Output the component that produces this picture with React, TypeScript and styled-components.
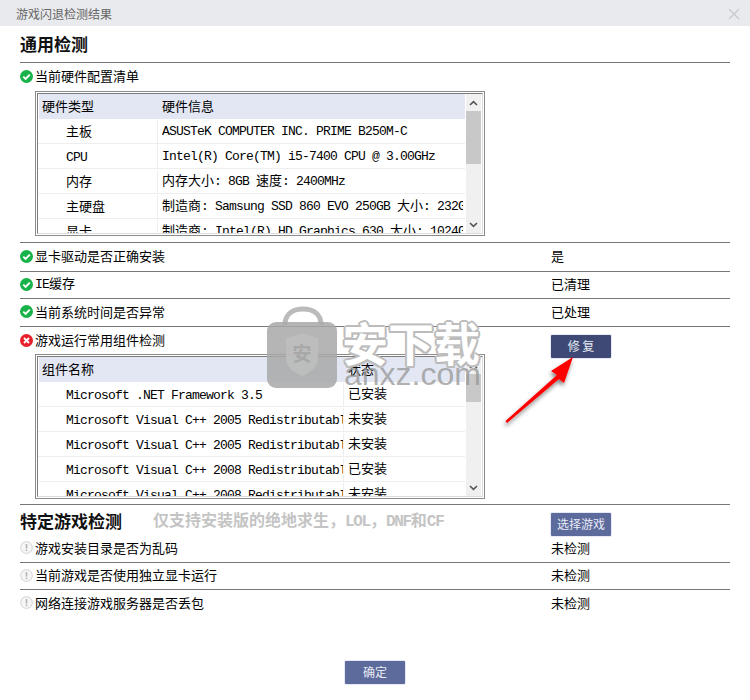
import React from "react";
import styled, { createGlobalStyle } from "styled-components";

const Global = createGlobalStyle`
  html, body { margin: 0; padding: 0; background: #fff; }
  body { font-family: "Noto Sans CJK SC", "Liberation Sans", sans-serif; font-size: 13px; color: #000; }
`;

const Window = styled.div`
  position: relative;
  width: 750px;
  height: 700px;
  display: flex;
  flex-direction: column;
  overflow: hidden;
  background: #fff;
`;
const TitleBar = styled.div`
  height: 26px;
  flex: none;
  background: #e9eaee;
  display: flex;
  align-items: center;
  justify-content: space-between;
  padding: 1px 10px 0 16px;
  box-sizing: border-box;
  font-size: 12px;
  line-height: 24px;
  color: #666;
`;
const Main = styled.main`
  flex: 1;
  padding: 0 20px;
`;
const Heading = styled.h2`
  margin: 0;
  font-size: 17px;
  font-weight: 700;
  line-height: 20px;
  color: #111;
`;
const HeadingBar = styled.div`
  height: 36px;
  display: flex;
  align-items: center;
  padding-bottom: 1px;
  box-sizing: border-box;
`;
const Row = styled.section<{ $h: number; $rule?: boolean; $top?: boolean; $pb?: number }>`
  box-sizing: border-box;
  height: ${(p) => p.$h}px;
  padding-bottom: ${(p) => p.$pb ?? 2}px;
  border-top: ${(p) => (p.$rule === false ? "none" : "1px solid #777")};
  display: grid;
  grid-template-columns: 531px 1fr;
  align-items: ${(p) => (p.$top ? "start" : "center")};
`;
const Label = styled.div<{ $stack?: boolean }>`
  display: flex;
  align-items: center;
  gap: 2px;
  height: ${(p) => (p.$stack ? "26px" : "auto")};
  line-height: 16px;
  white-space: nowrap;
`;
const Status = styled.div`
  line-height: 16px;
  white-space: nowrap;
`;
const HeadingLine = styled.div`
  display: flex;
  align-items: center;
  height: 31px;
  gap: 32px;
`;
const Latin = styled.span`
  font-family: "Liberation Mono", monospace;
  letter-spacing: -0.0615em;
  white-space: pre;
`;
const Note = styled.span`
  font-size: 16px;
  font-weight: 700;
  line-height: 20px;
  color: #c4c4c4;
  white-space: nowrap;
  margin-left: -1px;
  ${Latin} {
    letter-spacing: -1.3px;
  }
`;
const Action = styled.button<{ $dark?: boolean }>`
  width: 60px;
  height: 23px;
  box-sizing: border-box;
  padding: 0 0 1px;
  border: none;
  border-radius: 1px;
  box-shadow: 0 0 0 1px #e6e9f3;
  background: ${(p) => (p.$dark ? "#3e4a75" : "#5d6a9c")};
  color: #e8eaf4;
  font: 12px/20px "Noto Sans CJK SC", sans-serif;
  display: block;
`;
const ActionSlot = styled.div<{ $top: number }>`
  padding-top: ${(p) => p.$top}px;
`;
const Footer = styled.footer`
  height: 39px;
  flex: none;
  display: flex;
  justify-content: center;
`;

const TableBox = styled.div<{ $top: number }>`
  box-sizing: border-box;
  width: 450px;
  height: 145px;
  margin: ${(p) => p.$top}px 0 0 15px;
  padding: 1px;
  border: 1px solid #8b8b8b;
  background: #fff;
`;
const TableInner = styled.div`
  box-sizing: border-box;
  height: 141px;
  display: flex;
  border: 1px solid #7c7c7c;
  border-right-color: #dcdcdc;
  border-bottom-color: #dcdcdc;
  overflow: hidden;
`;
const List = styled.div`
  flex: none;
  width: 427px;
  height: 139px;
  overflow: hidden;
`;
const HeadRow = styled.div<{ $col: number }>`
  height: 25px;
  margin-left: 1px;
  padding-bottom: 2px;
  box-sizing: border-box;
  background: #e3e7f3;
  display: grid;
  grid-template-columns: ${(p) => p.$col}px 1fr;
  align-items: center;
  line-height: 16px;
`;
const HeadCell = styled.div`
  padding-left: 3px;
  white-space: nowrap;
`;
const DataRow = styled.div<{ $col: number }>`
  box-sizing: border-box;
  height: 25px;
  border-bottom: 1px solid #eee;
  display: grid;
  grid-template-columns: ${(p) => p.$col}px 1fr;
  line-height: 22px;
`;
const NameCell = styled.div`
  padding-left: 28px;
  border-right: 1px solid #eee;
  margin-top: 1px;
  white-space: nowrap;
  overflow: hidden;
  box-sizing: border-box;
  line-height: 21px;
`;
const ValueCell = styled.div`
  padding-left: 4px;
  padding-right: 2px;
  white-space: nowrap;
  overflow: hidden;
`;
const Clip = styled.div`
  overflow: hidden;
`;
const Scrollbar = styled.div`
  flex: none;
  width: 15px;
  margin-left: 1px;
  display: flex;
  flex-direction: column;
  background: #f0f0f0;
`;
const ScrollBtn = styled.div`
  height: 17px;
  flex: none;
  display: flex;
  align-items: center;
  justify-content: center;
`;
const Thumb = styled.div<{ $h: number }>`
  height: ${(p) => p.$h}px;
  flex: none;
  background: #c8c8c8;
`;
const Spacer = styled.div`
  flex: 1;
`;

const Watermark = styled.div`
  position: absolute;
  left: 266px;
  top: 305px;
  width: 220px;
  height: 86px;
  pointer-events: none;
`;
const WatermarkMark = styled.svg`
  position: absolute;
  left: 0;
  top: 0;
`;
const WatermarkCn = styled.div`
  position: absolute;
  left: 76px;
  top: 11px;
  font: 700 46px/50px "Noto Sans CJK SC", sans-serif;
  color: #fff;
  text-shadow:
    2px 0 0 #bcbcbc, -2px 0 0 #bcbcbc, 0 2px 0 #bcbcbc, 0 -2px 0 #bcbcbc,
    1.5px 1.5px 0 #bcbcbc, -1.5px 1.5px 0 #bcbcbc, 1.5px -1.5px 0 #bcbcbc, -1.5px -1.5px 0 #bcbcbc;
  white-space: nowrap;
`;
const WatermarkEn = styled.div`
  position: absolute;
  left: 78px;
  top: 51px;
  font: 32px/36px "Liberation Sans", sans-serif;
  color: rgba(150, 150, 150, 0.75);
  white-space: nowrap;
`;
const ArrowOverlay = styled.svg`
  position: absolute;
  left: 495px;
  top: 345px;
  pointer-events: none;
  overflow: visible;
`;

const mixed = (text: string) =>
  text.split(/([\x20-\x7e]+)/).filter(Boolean).map((part, i) =>
    /^[\x20-\x7e]+$/.test(part) ? <Latin key={i}>{part}</Latin> : <span key={i}>{part}</span>
  );

const Icon: React.FC<{ kind: "ok" | "bad" | "warn" }> = ({ kind }) => (
  <svg width="13" height="13" viewBox="0 0 13 13" style={{ flex: "none" }}>
    {kind === "ok" && (
      <>
        <circle cx="6.5" cy="6.5" r="6.5" fill="#17b34a" />
        <path d="M3.3 6.7 5.6 9 9.8 4.6" fill="none" stroke="#fff" strokeWidth="1.9" />
      </>
    )}
    {kind === "bad" && (
      <>
        <circle cx="6.5" cy="6.5" r="6.5" fill="#e8202a" />
        <path d="M4 4 9 9M9 4 4 9" fill="none" stroke="#fff" strokeWidth="1.9" />
      </>
    )}
    {kind === "warn" && (
      <>
        <circle cx="6.5" cy="6.5" r="5.8" fill="#f6f6f6" stroke="#dcdcdc" strokeWidth="1.2" />
        <path d="M6.5 3v4.6" stroke="#b5b5b5" strokeWidth="1.6" />
        <path d="M6.5 8.6v1.5" stroke="#b5b5b5" strokeWidth="1.6" />
      </>
    )}
  </svg>
);

const Chevron: React.FC<{ up?: boolean }> = ({ up }) => (
  <svg width="9" height="6" viewBox="0 0 9 6">
    <path d={up ? "M1 5 4.5 1.6 8 5" : "M1 1 4.5 4.4 8 1"} fill="none" stroke="#555" strokeWidth="1.6" />
  </svg>
);

type TableProps = {
  top: number;
  col: number;
  thumb: number;
  head: [string, string];
  rows: [string, string][];
};

const Table: React.FC<TableProps> = ({ top, col, thumb, head, rows }) => (
  <TableBox $top={top}>
    <TableInner>
      <List>
        <HeadRow $col={col}>
          <HeadCell>{head[0]}</HeadCell>
          <HeadCell>{head[1]}</HeadCell>
        </HeadRow>
        {rows.map((r, i) => (
          <DataRow key={i} $col={col}>
            <NameCell>
              <Clip>{mixed(r[0])}</Clip>
            </NameCell>
            <ValueCell>
              <Clip>{mixed(r[1])}</Clip>
            </ValueCell>
          </DataRow>
        ))}
      </List>
      <Scrollbar>
        <ScrollBtn>
          <Chevron up />
        </ScrollBtn>
        <Thumb $h={thumb} />
        <Spacer />
        <ScrollBtn>
          <Chevron />
        </ScrollBtn>
      </Scrollbar>
    </TableInner>
  </TableBox>
);

const hardware: [string, string][] = [
  ["主板", "ASUSTeK COMPUTER INC. PRIME B250M-C"],
  ["CPU", "Intel(R) Core(TM) i5-7400 CPU @ 3.00GHz"],
  ["内存", "内存大小: 8GB 速度: 2400MHz"],
  ["主硬盘", "制造商: Samsung SSD 860 EVO 250GB 大小: 232GB"],
  ["显卡", "制造商: Intel(R) HD Graphics 630 大小: 1024GB"],
];
const components: [string, string][] = [
  ["Microsoft .NET Framework 3.5", "已安装"],
  ["Microsoft Visual C++ 2005 Redistributable", "未安装"],
  ["Microsoft Visual C++ 2005 Redistributable", "未安装"],
  ["Microsoft Visual C++ 2008 Redistributable", "已安装"],
  ["Microsoft Visual C++ 2008 Redistributable", "未安装"],
];

export default function App() {
  return (
    <Window>
      <Global />
      <TitleBar>
        <span>游戏闪退检测结果</span>
        <svg width="12" height="12" viewBox="0 0 12 12">
          <path d="M1 1 11 11M11 1 1 11" stroke="#c6c7cb" strokeWidth="1.1" fill="none" />
        </svg>
      </TitleBar>
      <Main>
        <HeadingBar>
          <Heading>通用检测</Heading>
        </HeadingBar>
        <Row $h={180} $top $pb={0}>
          <div>
            <Label $stack>
              <Icon kind="ok" />
              <span>当前硬件配置清单</span>
            </Label>
            <Table top={2} col={120} thumb={53} head={["硬件类型", "硬件信息"]} rows={hardware} />
          </div>
        </Row>
        <Row $h={29}>
          <Label>
            <Icon kind="ok" />
            <span>显卡驱动是否正确安装</span>
          </Label>
          <Status>是</Status>
        </Row>
        <Row $h={27}>
          <Label>
            <Icon kind="ok" />
            <span>{mixed("IE")}缓存</span>
          </Label>
          <Status>已清理</Status>
        </Row>
        <Row $h={28}>
          <Label>
            <Icon kind="ok" />
            <span>当前系统时间是否异常</span>
          </Label>
          <Status>已处理</Status>
        </Row>
        <Row $h={178} $top $pb={0}>
          <div>
            <Label $stack>
              <Icon kind="bad" />
              <span>游戏运行常用组件检测</span>
            </Label>
            <Table top={1} col={306} thumb={28} head={["组件名称", "状态"]} rows={components} />
          </div>
          <ActionSlot $top={8}>
            <Action $dark>修 复</Action>
          </ActionSlot>
        </Row>
        <Row $h={33} $top $pb={0}>
          <HeadingLine>
            <Heading>特定游戏检测</Heading>
            <Note>{mixed("仅支持安装版的绝地求生\uFF0CLOL\uFF0CDNF和CF")}</Note>
          </HeadingLine>
          <ActionSlot $top={8}>
            <Action>选择游戏</Action>
          </ActionSlot>
        </Row>
        <Row $h={25} $rule={false} $pb={4}>
          <Label>
            <Icon kind="warn" />
            <span>游戏安装目录是否为乱码</span>
          </Label>
          <Status>未检测</Status>
        </Row>
        <Row $h={27}>
          <Label>
            <Icon kind="warn" />
            <span>当前游戏是否使用独立显卡运行</span>
          </Label>
          <Status>未检测</Status>
        </Row>
        <Row $h={28}>
          <Label>
            <Icon kind="warn" />
            <span>网络连接游戏服务器是否丢包</span>
          </Label>
          <Status>未检测</Status>
        </Row>
      </Main>
      <Footer>
        <Action>确定</Action>
      </Footer>
      <Watermark>
        <WatermarkMark width="76" height="86" viewBox="0 0 76 86">
          <path d="M19 20C19 8 28 4 37 4S55 8 55 20" fill="none" stroke="rgba(170,170,170,.8)" strokeWidth="5" />
          <rect x="1" y="17" width="70" height="66" rx="9" fill="rgba(168,168,168,.85)" />
          <path d="M36 28 52 33V53C52 63 43 68 36 71 29 68 20 63 20 53V33Z" fill="rgba(190,190,190,.9)" />
          <text x="36" y="56" textAnchor="middle" fontSize="19" fontWeight="700" fill="#a8a8a8" fontFamily="Noto Sans CJK SC, sans-serif">安</text>
        </WatermarkMark>
        <WatermarkCn>安下载</WatermarkCn>
        <WatermarkEn>anxz.com</WatermarkEn>
      </Watermark>
      <ArrowOverlay width="90" height="90" viewBox="0 0 90 90">
        <defs>
          <filter id="arrowShadow" x="-30%" y="-30%" width="160%" height="160%">
            <feDropShadow dx="-1" dy="3" stdDeviation="2" floodColor="#000" floodOpacity="0.5" />
          </filter>
        </defs>
        <polygon
          points="78,12 56,26 62,30 10.5,76 12,78 64,34 69,38"
          fill="#f00"
          filter="url(#arrowShadow)"
        />
      </ArrowOverlay>
    </Window>
  );
}
